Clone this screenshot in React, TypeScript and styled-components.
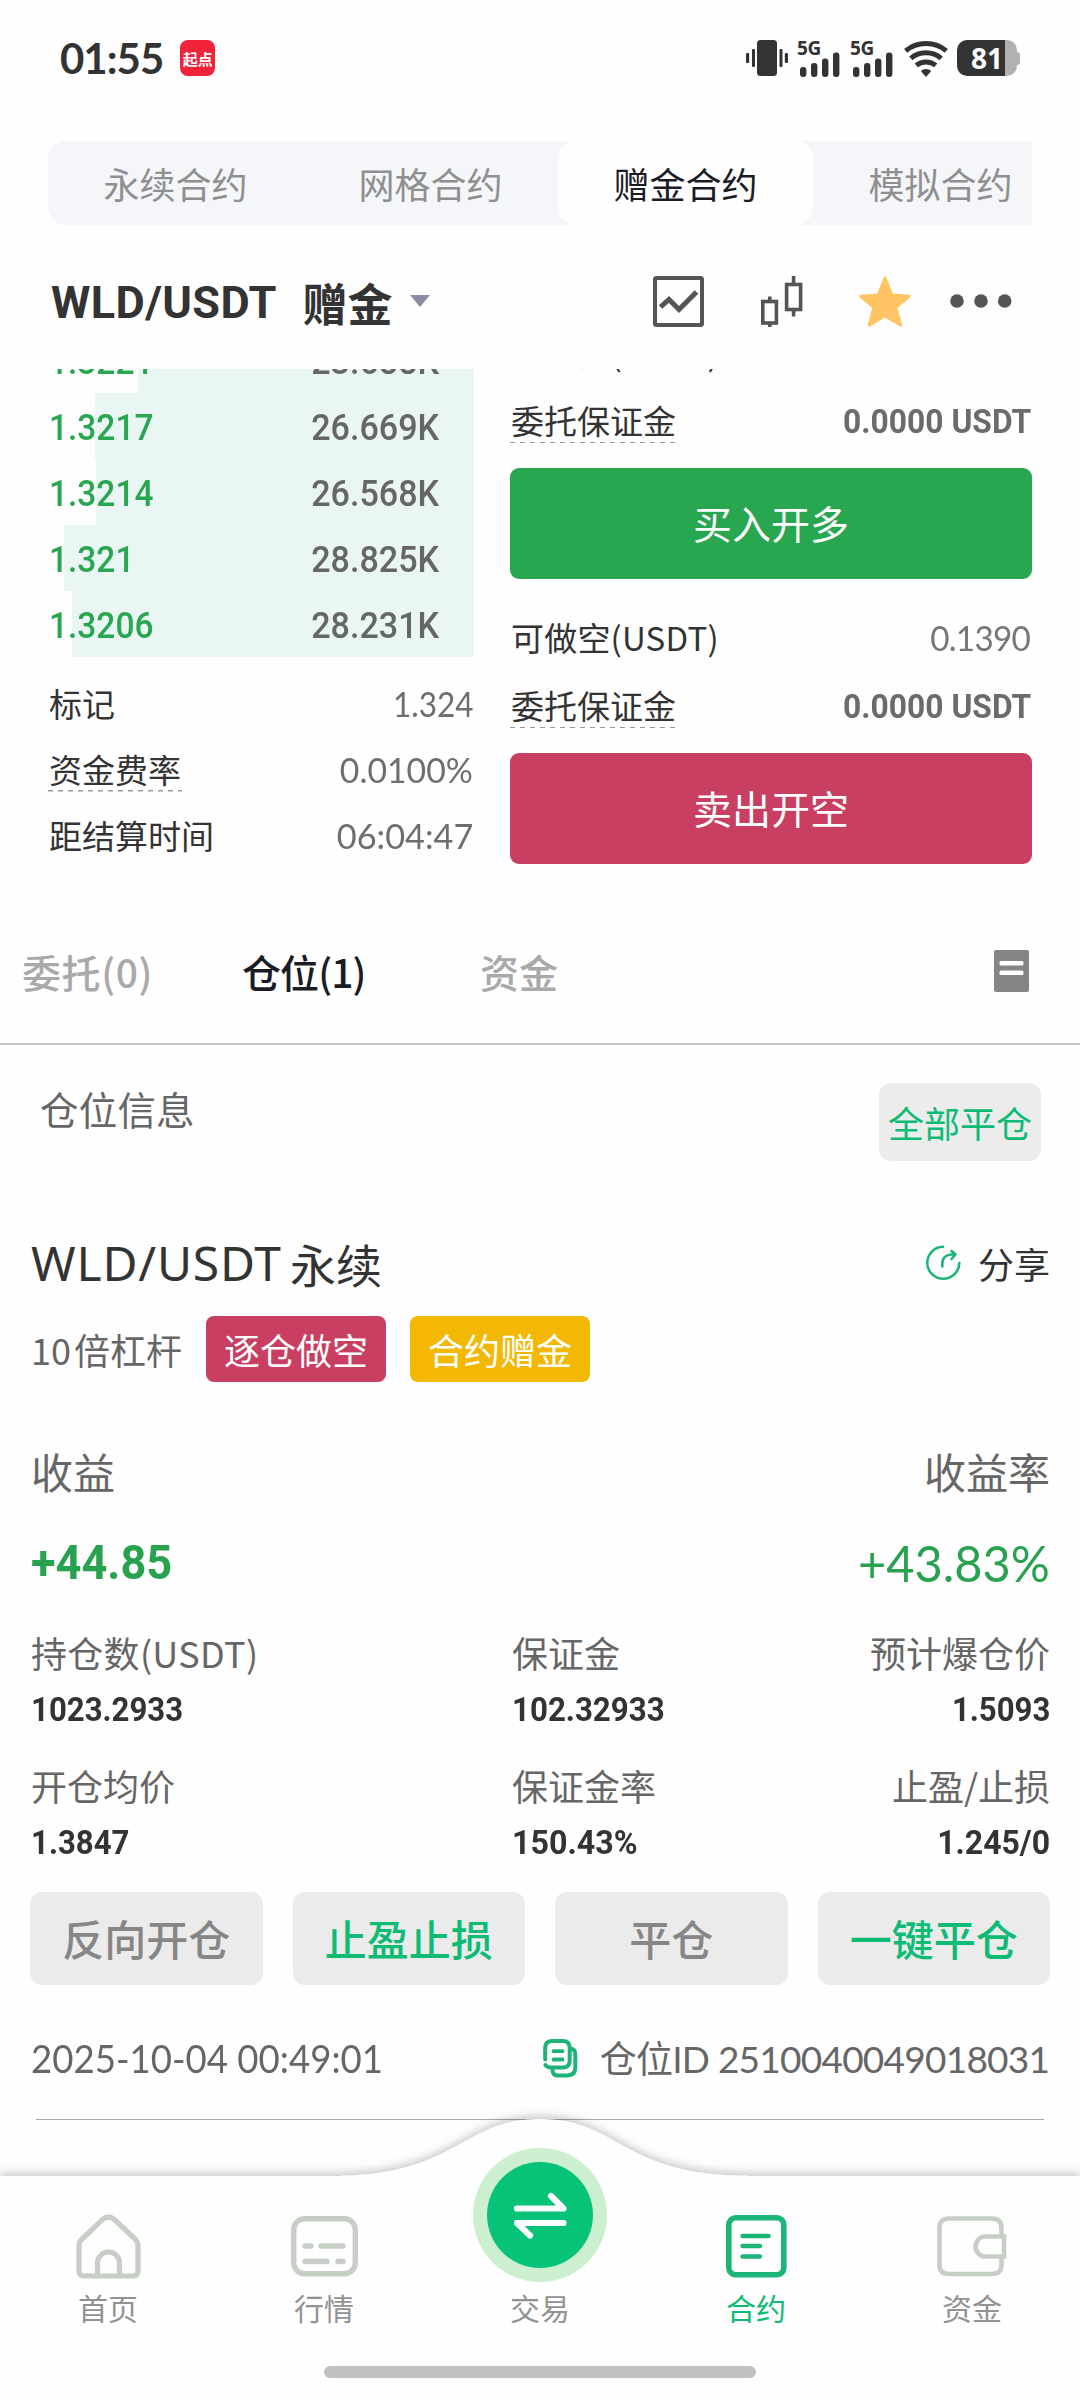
import React from 'react';
import styled, { createGlobalStyle } from 'styled-components';

const CJK = `'Noto Sans CJK SC', sans-serif`;
const ROUND = `Lato, 'Noto Sans CJK SC', sans-serif`;
const DIN = `Roboto, 'Noto Sans CJK SC', sans-serif`;

const GREEN = '#28a750';
const RED = '#c83f62';
const MINT = '#1cb577';
const MINT_TEXT = '#0dbb75';
const GREY = '#666666';

const Global = createGlobalStyle`
  * { box-sizing: border-box; }
  html, body { margin: 0; padding: 0; background: #fefefe; }
  body { font-family: ${CJK}; color: #333; }
`;

type TextProps = {
  $size: number;
  $color?: string;
  $weight?: number;
  $font?: string;
  $track?: number;
};

const Text = styled.span<TextProps>`
  display: block;
  white-space: nowrap;
  line-height: 1;
  font-size: ${(p) => p.$size}px;
  color: ${(p) => p.$color ?? '#333333'};
  font-weight: ${(p) => p.$weight ?? 400};
  font-family: ${(p) => p.$font ?? CJK};
  letter-spacing: ${(p) => p.$track ?? 0}px;
  margin-right: ${(p) => -(p.$track ?? 0)}px;
`;

/* Figures are set slightly condensed, anchored to the edge they align with. */
const Figure = styled(Text)<{ $squeeze: number; $anchor?: 'left' | 'right' }>`
  transform: scaleX(${(p) => p.$squeeze});
  transform-origin: ${(p) => p.$anchor ?? 'left'} center;
`;

const Screen = styled.main`
  width: 1080px;
  height: 2400px;
  display: flex;
  flex-direction: column;
  overflow: hidden;
  background: #fefefe;
`;

/* ---------- status bar ---------- */

const StatusBar = styled.header`
  height: 116px;
  flex: none;
  display: flex;
  align-items: center;
  justify-content: space-between;
  padding: 0 60px 0 60px;
`;

const StatusLeft = styled.div`
  display: flex;
  align-items: center;
  gap: 16px;
`;

const AppBadge = styled.div`
  width: 35px;
  height: 36px;
  border-radius: 8px;
  background: #f0233a;
  display: flex;
  align-items: center;
  justify-content: center;
`;

const StatusIcons = styled.div`
  display: flex;
  align-items: center;
`;

const Signal = styled.div`
  width: 53px;
  height: 36px;
  display: grid;
  position: relative;
`;

const SignalLabel = styled.span`
  position: absolute;
  left: 9px;
  top: 0;
  font: 700 19px/17px ${`'Open Sans', sans-serif`};
  letter-spacing: -0.4px;
  color: #333;
`;

const BatteryShell = styled.div`
  margin-left: 9px;
  display: flex;
  align-items: center;
`;

const BatteryBody = styled.div`
  width: 60px;
  height: 36px;
  border-radius: 10px;
  background: linear-gradient(to right, #333 48px, #b1b1b1 48px);
  padding-left: 14px;
  display: flex;
  align-items: center;
`;

const BatteryTip = styled.div`
  width: 3px;
  height: 13px;
  border-radius: 0 3px 3px 0;
  background: #b1b1b1;
`;

/* ---------- product tabs ---------- */

const ProductTabs = styled.nav`
  margin: 25px 48px 0;
  height: 84px;
  flex: none;
  display: flex;
  overflow: hidden;
  border-radius: 18px 0 0 18px;
  background: #f4f6fa;
`;

const ProductTab = styled.div<{ $active?: boolean }>`
  flex: 0 0 255px;
  display: flex;
  align-items: center;
  justify-content: center;
  padding-bottom: 1px;
  border-radius: 18px;
  background: ${(p) => (p.$active ? '#fefefe' : 'transparent')};
`;

/* ---------- pair header ---------- */

const PairHeader = styled.section`
  height: 144px;
  flex: none;
  display: flex;
  align-items: center;
  padding: 8px 68px 0 51px;
`;

const PairName = styled.div`
  display: flex;
  align-items: center;
  flex: 1;
  gap: 26px;
  padding-top: 3px;
`;

const Caret = styled.i`
  margin-left: -9px;
  margin-top: -4px;
  border: 10px solid transparent;
  border-top: 12px solid #8a8ba5;
  border-bottom: 0;
`;

const HeaderIcons = styled.div`
  display: grid;
  grid-template-columns: 108px 98px 91px 62px;
  align-items: center;
`;

/* ---------- trading area ---------- */

const TradeArea = styled.section`
  height: 535px;
  flex: none;
  display: grid;
  grid-template-columns: 426px 522px;
  column-gap: 36px;
  padding-left: 48px;
  overflow: hidden;
`;

const Column = styled.div`
  display: flex;
  flex-direction: column;
  min-height: 0;
`;

const Book = styled.div`
  height: 288px;
  display: flex;
  flex-direction: column;
  justify-content: flex-end;
  overflow: hidden;
`;

const BookRow = styled.div<{ $from: number }>`
  height: 66px;
  flex: none;
  display: flex;
  align-items: center;
  justify-content: space-between;
  padding: 4px 35px 0 1px;
  background: linear-gradient(to right, transparent ${(p) => p.$from}px, #eaf6f4 ${(p) => p.$from}px);
`;

const InfoList = styled.div`
  padding-top: 13px;
`;

const Row = styled.div<{ $h: number; $lift?: number }>`
  height: ${(p) => p.$h}px;
  flex: none;
  display: flex;
  align-items: center;
  justify-content: space-between;
  padding: 0 1px ${(p) => p.$lift ?? 0}px 0;
`;

const Label = styled.div<{ $dashed?: boolean }>`
  height: 45px;
  display: flex;
  align-items: center;
  padding: 0 1px;
  background: ${(p) =>
    p.$dashed
      ? 'repeating-linear-gradient(to right, #999 0 5px, transparent 5px 10px) left bottom / 100% 1.5px no-repeat'
      : 'none'};
`;

const TradeColumn = styled(Column)`
  height: 535px;
  justify-content: flex-end;
  padding-bottom: 40px;
`;

const TradeButton = styled.button<{ $bg: string }>`
  height: 111px;
  flex: none;
  border: 0;
  border-radius: 9px;
  background: ${(p) => p.$bg};
  display: flex;
  align-items: center;
  justify-content: center;
  padding: 0 0 2px;
`;

const Gap = styled.div<{ $h: number }>`
  height: ${(p) => p.$h}px;
  flex: none;
`;

/* ---------- section tabs ---------- */

const SectionTabs = styled.nav`
  height: 141px;
  flex: none;
  display: grid;
  grid-template-columns: 220px 238px 1fr auto;
  align-items: center;
  padding: 0 51px 5px 22px;
  border-bottom: 2px solid #c4c4c4;
`;

/* ---------- position card ---------- */

const PositionHead = styled.div`
  height: 156px;
  flex: none;
  display: flex;
  justify-content: space-between;
  padding: 38px 39px 0 40px;
`;

const HeadTitle = styled.div`
  padding-top: 6px;
`;

const CloseAll = styled.button`
  width: 162px;
  height: 78px;
  border: 0;
  border-radius: 12px;
  background: #ececec;
  display: flex;
  align-items: center;
  justify-content: center;
  padding: 0;
`;

const Card = styled.article`
  flex: none;
  padding: 0 30px;
  display: flex;
  flex-direction: column;
`;

const Line = styled.div<{ $h: number; $gap?: number }>`
  height: ${(p) => p.$h}px;
  flex: none;
  display: flex;
  align-items: center;
  gap: ${(p) => p.$gap ?? 0}px;
`;

const Split = styled(Line)`
  justify-content: space-between;
  padding-left: 1px;
`;

const TitleRow = styled(Split)`
  padding-top: 9px;
`;

const LeverRow = styled(Line)`
  padding-left: 1px;
  word-spacing: -5px;
`;

const Tag = styled.div<{ $bg: string }>`
  width: 180px;
  height: 66px;
  border-radius: 8px;
  background: ${(p) => p.$bg};
  display: flex;
  align-items: center;
  justify-content: center;
`;

const Stats = styled.div<{ $h: number }>`
  height: ${(p) => p.$h}px;
  display: grid;
  grid-template-columns: 481px 1fr auto;
  padding-left: 1px;
`;

const Stat = styled.div<{ $end?: boolean }>`
  display: flex;
  flex-direction: column;
  gap: 22px;
  align-items: ${(p) => (p.$end ? 'flex-end' : 'flex-start')};
`;

const Actions = styled.div`
  display: grid;
  grid-template-columns: repeat(4, 1fr);
  gap: 30px;
`;

const Action = styled.button`
  height: 93px;
  border: 0;
  border-radius: 12px;
  background: #ebebeb;
  display: flex;
  align-items: center;
  justify-content: center;
  padding: 0 0 1px;
`;

const Rule = styled.hr`
  width: 1008px;
  height: 1px;
  flex: none;
  margin: 28px auto 0;
  border: 0;
  background: #a8a8a8;
`;

/* ---------- bottom navigation ---------- */

const BottomNav = styled.footer`
  position: relative;
  margin-top: -20px;
  height: 300px;
  flex: none;
`;

const NavShape = styled.svg`
  position: absolute;
  inset: 0;
`;

const NavItems = styled.div`
  position: relative;
  height: 222px;
  display: grid;
  grid-template-columns: repeat(5, 216px);
`;

const NavItem = styled.div`
  display: flex;
  flex-direction: column;
  align-items: center;
  justify-content: flex-end;
  gap: 13px;
`;

const HomeBar = styled.div`
  position: relative;
  width: 432px;
  height: 12px;
  margin: 44px auto 0;
  border-radius: 6px;
  background: #c1c1c1;
`;

/* ---------- icons ---------- */

const VibrateIcon = () => (
  <svg width="42" height="36" viewBox="0 0 42 36" fill="#333">
    <rect x="11" y="0" width="20" height="36" rx="3.5" />
    <rect x="6" y="9" width="3" height="18" rx="1" />
    <rect x="0" y="13" width="3.2" height="10" rx="1" />
    <rect x="33.5" y="9" width="3" height="18" rx="1" />
    <rect x="38.8" y="13" width="3.2" height="10" rx="1" />
  </svg>
);

const SignalBars = () => (
  <Signal>
    <SignalLabel>5G</SignalLabel>
    <svg width="53" height="38" viewBox="0 0 53 38" fill="#333">
      <rect x="12" y="27" width="6.4" height="10" rx="3" />
      <rect x="23" y="23" width="6.4" height="14" rx="3" />
      <rect x="34" y="18.5" width="6.4" height="18.5" rx="3" />
      <rect x="45" y="12.5" width="6.4" height="24.5" rx="3" />
    </svg>
  </Signal>
);

const Wifi = styled.svg`
  margin-left: 10px;
`;

const WifiIcon = () => (
  <Wifi width="44" height="37" viewBox="0 0 44 37" fill="none" stroke="#333" strokeWidth="5">
    <path d="M1.7 10.8C13 1 31 1 42.3 10.8" />
    <path d="M6.8 18.4c8.5-7.6 21.9-7.6 30.4 0" />
    <path d="M12.3 25.4c5.5-4.6 13.9-4.6 19.4 0" />
    <path d="M16.8 31c2.800-2.800 7.600-2.800 10.400 0L22 37z" fill="#333" stroke="none" />
  </Wifi>
);

const ChartIcon = () => (
  <svg width="51" height="51" viewBox="0 0 51 51" fill="none" stroke="#555" strokeWidth="4">
    <rect x="2" y="2" width="47" height="47" rx="1.5" />
    <path d="M7.5 31l8.500-7.500 10 10L43.500 16" strokeWidth="5" />
  </svg>
);

const CandleIcon = () => (
  <svg width="42" height="51" viewBox="0 0 42 51" fill="none" stroke="#555" strokeWidth="3.6">
    <rect x="1.800" y="25.500" width="13.600" height="21.500" />
    <rect x="25.600" y="8.500" width="14" height="25" />
    <path d="M8.800 20.500v5M8.800 47v4M32.600 0v8.500M32.600 33.500v7" />
  </svg>
);

const StarIcon = () => (
  <svg width="52" height="51" viewBox="0 0 52 51" fill="#ffc565" stroke="#ffc565" strokeWidth="3" strokeLinejoin="round">
    <path d="M26 2l6.800 17 17.400 1.200-13.400 11.400 5 17.600L26 39.600 10.200 49.200l4.600-17.600L1.600 20.200 19.200 19z" />
  </svg>
);

const DotsIcon = () => (
  <svg width="62" height="14" viewBox="0 0 62 14" fill="#555">
    <circle cx="7" cy="7" r="6.800" />
    <circle cx="31" cy="7" r="6.800" />
    <circle cx="54.700" cy="7" r="6.800" />
  </svg>
);

const RecordsIcon = () => (
  <svg width="35" height="42" viewBox="0 0 35 42">
    <rect width="35" height="42" rx="2" fill="#858585" />
    <rect x="5.500" y="11" width="24" height="4.500" rx="1.500" fill="#fff" />
    <rect x="5.500" y="20.500" width="24" height="4.500" rx="1.500" fill="#fff" />
  </svg>
);

const ShareIcon = () => (
  <svg width="36" height="36" viewBox="0 0 36 36" fill="none" stroke={MINT} strokeWidth="2.600" strokeLinecap="round" strokeLinejoin="round">
    <path d="M18 1.800A16 16 0 1 0 34.300 18" />
    <path d="M17.300 21.500v-3c0-5.500 4-9 9-9h3.500" />
    <path d="M26.500 6l4 3.500-4 4.500" />
  </svg>
);

const CopyIcon = () => (
  <svg width="35" height="39" viewBox="0 0 35 39" fill="none" stroke={MINT} strokeWidth="4" strokeLinecap="round" strokeLinejoin="round">
    <path d="M2.200 20.500V9q0-7 7-7h10.500q7 0 7 7v12.500q0 7-7 7H8q-4 0-5.500-2.500" />
    <path d="M27.500 9.500q4.800.5 4.800 6v12.500q0 8.500-8.500 8.500H15q-5 0-5.500-5" />
    <path d="M10.500 12.200h9M10.500 20.500h9" strokeWidth="3.800" />
  </svg>
);

const HomeIcon = () => (
  <svg width="65" height="65" viewBox="0 0 65 65" fill="none" stroke="#c6cec6" strokeWidth="5.200" strokeLinejoin="round">
    <path d="M3 57V31.500q0-3.500 2.500-6L27 5.200q5.500-4.400 11 0L59.500 25.500q2.500 2.500 2.500 6V57q0 5-5 5H8q-5 0-5-5z" />
    <path d="M21.500 61V49a11 11 0 0 1 22 0v12" />
  </svg>
);

const MarketIcon = () => (
  <svg width="67" height="65" viewBox="0 0 67 65" fill="none" stroke="#c6cec6" strokeWidth="5.400" strokeLinecap="round">
    <rect x="2.700" y="4.700" width="61.600" height="55" rx="11" />
    <path d="M14 32h6M30 32h22M14 47.500h22M47 47.500h5" />
  </svg>
);

const Swap = styled.svg`
  margin-bottom: -3px;
`;

const SwapIcon = () => (
  <Swap width="134" height="134" viewBox="0 0 134 134">
    <circle cx="67" cy="67" r="67" fill="#ccf0cf" />
    <circle cx="67" cy="67" r="53" fill="#06c377" />
    <path d="M44 60.500h46.500L78 48M90.500 75H44l13 12.500" fill="none" stroke="#fff" strokeWidth="6.200" strokeLinecap="round" strokeLinejoin="round" />
  </Swap>
);

const ContractIcon = () => (
  <svg width="61" height="65" viewBox="0 0 61 65" fill="none" stroke={MINT} strokeWidth="5.600" strokeLinecap="round">
    <rect x="2.800" y="3.800" width="55" height="57" rx="7" />
    <path d="M16.500 22h26M16.500 32h17.500M16.500 42.500h17.500" strokeWidth="4.400" />
  </svg>
);

const WalletIcon = () => (
  <svg width="70" height="65" viewBox="0 0 70 65" fill="none" stroke="#c6cec6" strokeWidth="4.600">
    <path d="M64.500 22V14q0-9.500-9.500-9.500H12q-9.500 0-9.500 9.500v36.500q0 9.500 9.500 9.500h43q9.500 0 9.500-9.500V43" />
    <path d="M67 22.500H48.500a10 10 0 0 0 0 20H67z" />
  </svg>
);

/* ---------- data ---------- */

const bids = [
  { price: '1.3221', amount: '23.688K', from: 90 },
  { price: '1.3217', amount: '26.669K', from: 47 },
  { price: '1.3214', amount: '26.568K', from: 48 },
  { price: '1.321', amount: '28.825K', from: 16 },
  { price: '1.3206', amount: '28.231K', from: 24 },
];

const info = [
  { label: '标记', value: '1.324', squeeze: 0.9 },
  { label: '资金费率', value: '0.0100%', dashed: true, squeeze: 0.965 },
  { label: '距结算时间', value: '06:04:47', squeeze: 0.98 },
];

const stats = [
  [
    { label: '持仓数(USDT)', value: '1023.2933', squeeze: 0.917 },
    { label: '保证金', value: '102.32933', squeeze: 0.92 },
    { label: '预计爆仓价', value: '1.5093', squeeze: 0.917 },
  ],
  [
    { label: '开仓均价', value: '1.3847', squeeze: 0.917 },
    { label: '保证金率', value: '150.43%', squeeze: 0.948 },
    { label: '止盈/止损', value: '1.245/0', squeeze: 0.94 },
  ],
];

const actions = [
  { label: '反向开仓', on: false },
  { label: '止盈止损', on: true },
  { label: '平仓', on: false },
  { label: '一键平仓', on: true },
];

const nav = [
  { label: '首页', icon: <HomeIcon /> },
  { label: '行情', icon: <MarketIcon /> },
  { label: '交易', icon: <SwapIcon /> },
  { label: '合约', icon: <ContractIcon />, on: true },
  { label: '资金', icon: <WalletIcon /> },
];

const Order = ({ name, available, button, color }: { name: string; available: string; button: string; color: string }) => (
  <>
    <Row $h={66} $lift={8}>
      <Label>
        <Text $size={33} $track={0.2}>{name}</Text>
      </Label>
      <Figure $size={35} $font={ROUND} $color="#777" $track={-0.8} $squeeze={0.95} $anchor="right">{available}</Figure>
    </Row>
    <Row $h={66} $lift={3}>
      <Label $dashed>
        <Text $size={33}>委托保证金</Text>
      </Label>
      <Figure $size={34} $font={DIN} $weight={700} $color="#6b6b6b" $squeeze={0.935} $anchor="right">0.0000 USDT</Figure>
    </Row>
    <Gap $h={13} />
    <TradeButton $bg={color}>
      <Text $size={39} $color="#fff">{button}</Text>
    </TradeButton>
  </>
);

export default function App() {
  return (
    <Screen>
      <Global />
      <StatusBar>
        <StatusLeft>
          <Text $size={42} $font={ROUND} $weight={700} $track={-1}>01:55</Text>
          <AppBadge>
            <Text $size={15} $weight={700} $color="#fff">起点</Text>
          </AppBadge>
        </StatusLeft>
        <StatusIcons>
          <VibrateIcon />
          <SignalBars />
          <SignalBars />
          <WifiIcon />
          <BatteryShell>
            <BatteryBody>
              <Text $size={28} $font="'Open Sans', sans-serif" $weight={700} $color="#fff">81</Text>
            </BatteryBody>
            <BatteryTip />
          </BatteryShell>
        </StatusIcons>
      </StatusBar>

      <ProductTabs>
        {['永续合约', '网格合约', '赠金合约', '模拟合约'].map((t) => (
          <ProductTab key={t} $active={t === '赠金合约'}>
            <Text $size={36} $color={t === '赠金合约' ? '#1b1b26' : '#8f8f8f'}>{t}</Text>
          </ProductTab>
        ))}
      </ProductTabs>

      <PairHeader>
        <PairName>
          <Text $size={45} $font={DIN} $weight={700} $track={0.4}>WLD/USDT</Text>
          <Text $size={45} $weight={700}>赠金</Text>
          <Caret />
        </PairName>
        <HeaderIcons>
          <ChartIcon />
          <CandleIcon />
          <StarIcon />
          <DotsIcon />
        </HeaderIcons>
      </PairHeader>

      <TradeArea>
        <Column>
          <Book>
            {bids.map((b) => (
              <BookRow key={b.price} $from={b.from}>
                <Figure $size={36} $font={DIN} $weight={500} $color={GREEN} $squeeze={0.93}>{b.price}</Figure>
                <Figure $size={36} $font={DIN} $weight={500} $color={GREY} $squeeze={0.947} $anchor="right">{b.amount}</Figure>
              </BookRow>
            ))}
          </Book>
          <InfoList>
            {info.map((i) => (
              <Row key={i.label} $h={66}>
                <Label $dashed={i.dashed}>
                  <Text $size={33}>{i.label}</Text>
                </Label>
                <Figure $size={35} $font={ROUND} $color="#6e6e6e" $squeeze={i.squeeze} $anchor="right">{i.value}</Figure>
              </Row>
            ))}
          </InfoList>
        </Column>
        <TradeColumn>
          <Order name="可做多(USDT)" available="0.1390" button="买入开多" color={GREEN} />
          <Gap $h={29} />
          <Order name="可做空(USDT)" available="0.1390" button="卖出开空" color={RED} />
        </TradeColumn>
      </TradeArea>

      <SectionTabs>
        <Text $size={39} $weight={500} $color="#a9a9a9" $track={0.6}>委托(0)</Text>
        <Text $size={39} $weight={500} $color="#1b1b26" $track={-0.9}>仓位(1)</Text>
        <Text $size={39} $weight={500} $color="#a9a9a9">资金</Text>
        <RecordsIcon />
      </SectionTabs>

      <PositionHead>
        <HeadTitle>
          <Text $size={38.5} $color={GREY} $track={0.2}>仓位信息</Text>
        </HeadTitle>
        <CloseAll>
          <Text $size={36} $color={MINT_TEXT}>全部平仓</Text>
        </CloseAll>
      </PositionHead>

      <Card>
        <TitleRow $h={115}>
          <Line $h={60} $gap={9}>
            <Text $size={48} $font="'Noto Sans', sans-serif" $track={0.8}>WLD/USDT</Text>
            <Text $size={46}>永续</Text>
          </Line>
          <Line $h={60} $gap={17}>
            <ShareIcon />
            <Text $size={36}>分享</Text>
          </Line>
        </TitleRow>
        <LeverRow $h={66} $gap={24}>
          <Text $size={36} $color={GREY}>10 倍杠杆</Text>
          <Tag $bg={RED}>
            <Text $size={36} $color="#fff">逐仓做空</Text>
          </Tag>
          <Tag $bg="#f3b804">
            <Text $size={36} $color="#fff">合约赠金</Text>
          </Tag>
        </LeverRow>
        <Gap $h={43} />
        <Split $h={92}>
          <Text $size={42} $color={GREY}>收益</Text>
          <Text $size={42} $color={GREY}>收益率</Text>
        </Split>
        <Split $h={92}>
          <Figure $size={48} $font={DIN} $weight={700} $color="#28a24f" $squeeze={0.94}>+44.85</Figure>
          <Figure $size={50} $font={ROUND} $color="#28a24f" $squeeze={0.975} $anchor="right">+43.83%</Figure>
        </Split>
        <Gap $h={25} />
        {stats.map((row, r) => (
          <Stats key={row[0].label} $h={r === 0 ? 133 : 125}>
            {row.map((s, i) => (
              <Stat key={s.label} $end={i === 2}>
                <Text $size={36} $color={GREY} $track={s.label.endsWith(')') ? 0.3 : 0}>{s.label}</Text>
                <Figure $size={34} $font={DIN} $weight={700} $squeeze={s.squeeze} $anchor={i === 2 ? 'right' : 'left'}>{s.value}</Figure>
              </Stat>
            ))}
          </Stats>
        ))}
        <Actions>
          {actions.map((a) => (
            <Action key={a.label}>
              <Text $size={42} $weight={500} $color={a.on ? MINT_TEXT : '#868686'}>{a.label}</Text>
            </Action>
          ))}
        </Actions>
        <Gap $h={40} />
        <Split $h={66}>
          <Figure $size={38} $font={ROUND} $color={GREY} $squeeze={0.963}>2025-10-04 00:49:01</Figure>
          <Line $h={66} $gap={22}>
            <CopyIcon />
            <Text $size={37} $font={ROUND} $color={GREY} $track={-0.75}>仓位ID 2510040049018031</Text>
          </Line>
        </Split>
      </Card>
      <Rule />

      <BottomNav>
        <NavShape width="1080" height="300" viewBox="0 0 1080 300">
          <defs>
            <filter id="lift" x="-5%" y="-20%" width="110%" height="140%">
              <feDropShadow dx="0" dy="-3" stdDeviation="5" floodColor="#000" floodOpacity="0.22" />
            </filter>
          </defs>
          <path
            d="M0 76H330C460 76 460 19 540 19S620 76 750 76H1080V300H0z"
            fill="#fefefe"
            filter="url(#lift)"
          />
        </NavShape>
        <NavItems>
          {nav.map((n) => (
            <NavItem key={n.label}>
              {n.icon}
              <Text $size={30} $color={n.on ? MINT_TEXT : '#929292'}>{n.label}</Text>
            </NavItem>
          ))}
        </NavItems>
        <HomeBar />
      </BottomNav>
    </Screen>
  );
}
